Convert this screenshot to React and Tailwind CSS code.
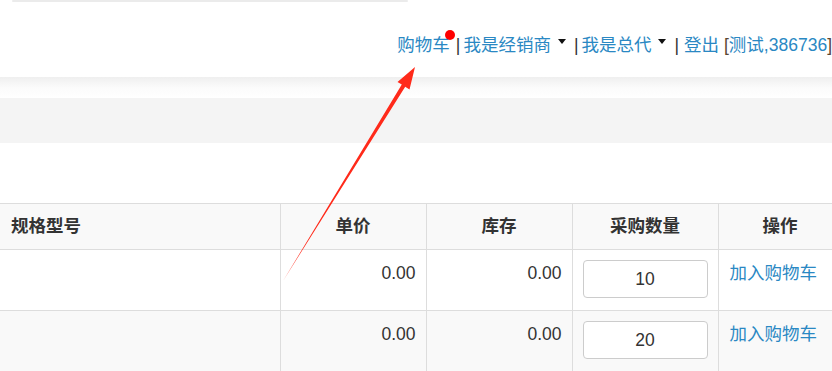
import React from 'react';

const rows = [
  { price: '0.00', stock: '0.00', qty: '10', bg: 'bg-white' },
  { price: '0.00', stock: '0.00', qty: '20', bg: 'bg-[#f9f9f9]' },
];

const Caret = () => (
  <span className="inline-block w-0 h-0 ml-[7px] mr-[5px] mb-[7px] align-middle border-t-[5px] border-x-[4px] border-x-transparent border-t-[#111]" />
);

const Sep = () => <span className="text-[#333] mx-[3px]">|</span>;

export default function App() {
  return (
    <div
      className="relative w-[832px] h-[371px] overflow-hidden bg-white text-[17.5px] text-[#333]"
      style={{ fontFamily: '"Liberation Sans", "Noto Sans CJK SC", sans-serif' }}
    >
      {/* Top bar */}
      <div className="h-[77px] bg-white">
        <div className="ml-[12px] w-[396px] h-[2px] bg-[#ebebeb] rounded-full" />
        <nav className="flex justify-end items-center pt-[31px] leading-[24px] whitespace-nowrap">
          <a className="relative text-[#2a88c3]">
            购物车
            <span className="absolute right-[-5px] top-[-3px] w-[10px] h-[10px] rounded-full bg-[#f00]" />
          </a>
          <span className="ml-[3px]"><Sep /></span>
          <a className="text-[#2a88c3]">我是经销商</a>
          <Caret />
          <Sep />
          <a className="text-[#2a88c3]">我是总代</a>
          <Caret />
          <Sep />
          <a className="text-[#2a88c3] ml-[2px]">登出</a>
          <span className="ml-[5px] text-[#5a4632]">[</span>
          <a className="text-[#2a88c3]">测试,386736</a>
          <span className="text-[#5a4632]">]</span>
        </nav>
      </div>
      <div className="h-[21px] bg-gradient-to-b from-[#efefef] via-[#fbfbfb] to-white" />
      <div className="h-[45px] bg-[#f4f4f4]" />
      <div className="h-[60px]" />

      {/* Table */}
      <table className="w-[842px] border-collapse table-fixed">
        <colgroup>
          <col className="w-[280px]" />
          <col className="w-[146px]" />
          <col className="w-[146px]" />
          <col className="w-[146px]" />
          <col className="w-[124px]" />
        </colgroup>
        <thead>
          <tr className="bg-[#f9f9f9] h-[46px] border-t border-[#dddddd]">
            <th className="text-left pl-[11px] font-bold border-r border-[#dddddd]">规格型号</th>
            <th className="text-center font-bold border-x border-[#dddddd]">单价</th>
            <th className="text-center font-bold border-x border-[#dddddd]">库存</th>
            <th className="text-center font-bold border-x border-[#dddddd]">采购数量</th>
            <th className="text-center font-bold border-x border-[#dddddd]">操作</th>
          </tr>
        </thead>
        <tbody>
          {rows.map((r, i) => (
            <tr key={i} className={`${r.bg} h-[61px] border-t border-[#dddddd]`}>
              <td className="border-r border-[#dddddd]" />
              <td className="align-top text-right pt-[10px] pr-[10px] border-x border-[#dddddd]">{r.price}</td>
              <td className="align-top text-right pt-[10px] pr-[10px] border-x border-[#dddddd]">{r.stock}</td>
              <td className="align-top pt-[10px] pl-[10px] border-x border-[#dddddd]">
                <input
                  readOnly
                  value={r.qty}
                  className="w-[125px] h-[38px] text-center text-[17.5px] text-[#333] bg-white border border-[#cccccc] rounded-[4px] outline-none"
                />
              </td>
              <td className="align-top pt-[10px] pl-[11px] border-x border-[#dddddd]">
                <a className="text-[#2a88c3]">加入购物车</a>
              </td>
            </tr>
          ))}
        </tbody>
      </table>

      {/* Red annotation arrow */}
      <svg className="absolute inset-0 pointer-events-none" width="832" height="371" viewBox="0 0 832 371">
        <polygon
          points="283,281 401.8,84.6 397.5,82 415,67 409.5,89.4 405.2,86.7"
          fill="#ff2a1a"
        />
      </svg>
    </div>
  );
}
